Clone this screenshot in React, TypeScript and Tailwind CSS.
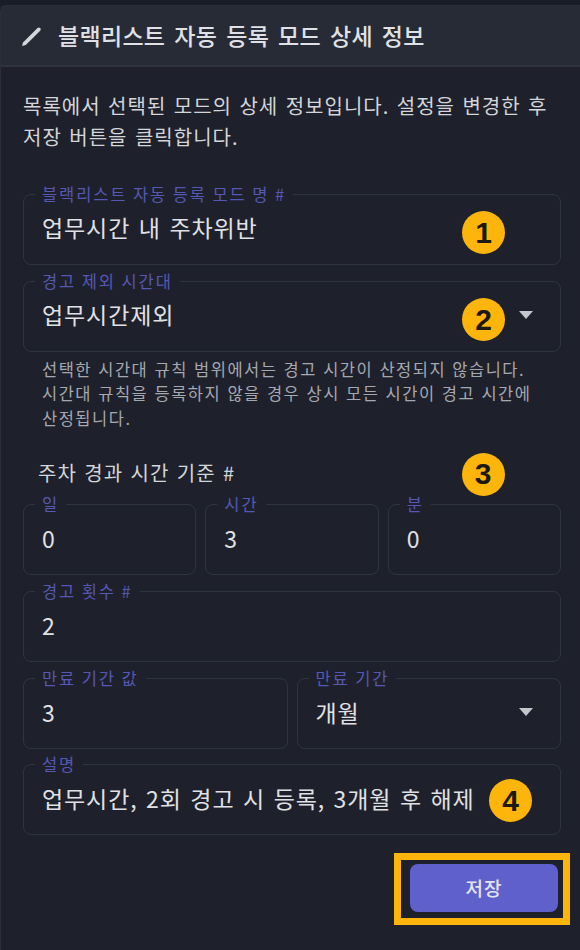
import React from "react";

const KR = "font-['Noto_Sans_CJK_KR','Noto_Sans',sans-serif]";

const Badge = ({ n, className }: { n: number; className: string }) => (
  <span
    className={`absolute flex h-[43px] w-[43px] items-center justify-center rounded-full bg-[#fdb50b] font-['Liberation_Sans',sans-serif] text-[30px] font-bold text-[#1c1a14] ${className}`}
  >
    {n}
  </span>
);

const Caret = () => (
  <span className="ml-auto mr-[7px] h-0 w-0 border-x-[7.5px] border-t-[8px] border-x-transparent border-t-[#c4c6cc]" />
);

interface FieldProps {
  label: string;
  value: string;
  select?: boolean;
  className?: string;
  children?: React.ReactNode;
}

const Field = ({ label, value, select, className = "", children }: FieldProps) => (
  <fieldset
    className={`relative flex h-[81px] min-w-0 rounded-[8px] border border-[#2f3540] pl-[18px] pr-[20px] ${className}`}
  >
    <legend className="ml-[-7px] whitespace-nowrap px-[7px] text-[16.5px] leading-[20px] tracking-[1.9px] text-[#5558b4]">
      {label}
    </legend>
    <div className="flex h-[47px] w-full items-center text-[23px] tracking-[0.9px] [word-spacing:2.5px] text-[#e0e1e5]">
      <span className="whitespace-nowrap">{value}</span>
      {select && <Caret />}
    </div>
    {children}
  </fieldset>
);

export default function App() {
  return (
    <div className={`h-[950px] w-[580px] overflow-hidden bg-[#1a1d27] pt-[5px] ${KR}`}>
      <div className="h-[945px] rounded-tl-[6px] border-l border-t border-[#2a2f3a] bg-[#1e212b]">
        <div className="flex h-[61px] items-center gap-[15px] border-b-2 border-[#2f3540] bg-[#262b36] pl-[20px]">
          <svg width="22" height="22" viewBox="0 0 22 22" fill="none" className="shrink-0">
            <path
              d="M1 21 L2 17.5 L16.5 3 Q18 2 19.2 3.2 Q20.2 4.6 19.2 5.8 L4.8 20 Z"
              fill="#d4d6da"
            />
          </svg>
          <h1 className="whitespace-nowrap text-[23px] font-medium tracking-[0.3px] [word-spacing:3.5px] text-[#e0e1e5]">
            블랙리스트 자동 등록 모드 상세 정보
          </h1>
        </div>

        <div className="pl-[22px] pr-[19px]">
          <p className="mt-[23px] whitespace-nowrap text-[20px] leading-[31px] tracking-[1px] [word-spacing:2px] text-[#d4d5d9]">
            목록에서 선택된 모드의 상세 정보입니다. 설정을 변경한 후
            <br />
            저장 버튼을 클릭합니다.
          </p>

          <Field label="블랙리스트 자동 등록 모드 명 #" value="업무시간 내 주차위반" className="mt-[32px]">
            <Badge n={1} className="left-[438px] top-[7px]" />
          </Field>

          <Field label="경고 제외 시간대" value="업무시간제외" select className="mt-[6px]">
            <Badge n={2} className="left-[438px] top-[7px]" />
          </Field>

          <p className="mt-[5px] whitespace-nowrap pl-[19px] text-[16.5px] leading-[24.3px] tracking-[1.5px] [word-spacing:1px] text-[#a6a8b0]">
            선택한 시간대 규칙 범위에서는 경고 시간이 산정되지 않습니다.
            <br />
            시간대 규칙을 등록하지 않을 경우 상시 모든 시간이 경고 시간에
            <br />
            산정됩니다.
          </p>

          <div className="relative mt-[29px] pl-[15px] text-[20px] leading-[28px] tracking-[1px] [word-spacing:2px] text-[#d4d5d9]">
            주차 경과 시간 기준 #
            <Badge n={3} className="left-[439px] top-[-6px]" />
          </div>

          <div className="mt-[7.6px] grid grid-cols-3 gap-[9px]">
            <Field label="일" value="0" />
            <Field label="시간" value="3" />
            <Field label="분" value="0" />
          </div>

          <Field label="경고 횟수 #" value="2" className="mt-[6px]" />

          <div className="mt-[6px] grid grid-cols-2 gap-[9px]">
            <Field label="만료 기간 값" value="3" />
            <Field label="만료 기간" value="개월" select />
          </div>

          <Field label="설명" value="업무시간, 2회 경고 시 등록, 3개월 후 해제" className="mt-[5px]">
            <Badge n={4} className="left-[465px] top-[5px]" />
          </Field>

          <div className="mt-[18px] flex justify-end">
            <div className="mr-[-9px] h-[72px] w-[176px] border-[7px] border-[#fdb50b] pl-[9px] pt-[4px]">
              <button className="h-[48px] w-[148px] rounded-[8px] bg-[#6060cd] text-[19px] font-medium tracking-[1px] text-[#e4e5e8]">
                저장
              </button>
            </div>
          </div>
        </div>
      </div>
    </div>
  );
}
